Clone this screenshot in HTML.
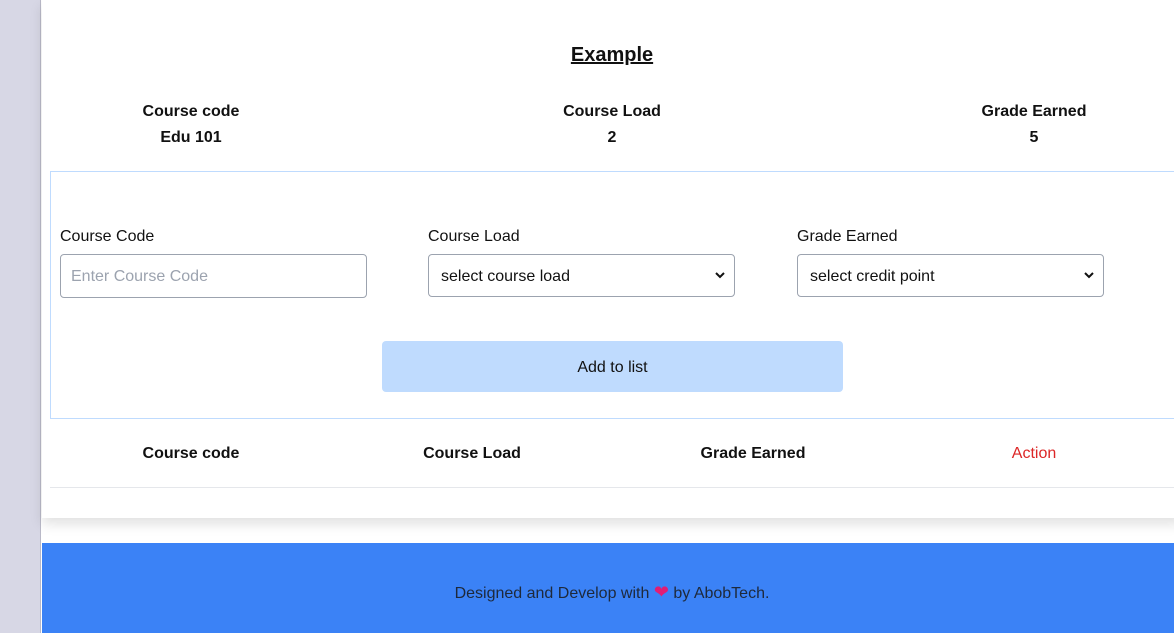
<!DOCTYPE html>
<html><head><style>
*{box-sizing:border-box;margin:0;padding:0}
body{width:1174px;height:633px;overflow:hidden;background:#fff;font-family:"Liberation Sans",sans-serif;color:#111;position:relative}
.a{position:absolute}
.c{text-align:center;transform:translateX(-50%);white-space:nowrap}
.b{font-weight:bold;font-size:16px}
.lbl{font-size:16px;color:#111}
.box{border:1px solid #9ca3af;border-radius:4px;height:44px;background:#fff;font-size:16px;padding:0 12px;line-height:44px}
.chev{position:absolute;right:8px;top:15px}
</style></head><body>
<div class="a" style="left:0;top:0;width:41px;height:633px;background:#d7d7e5;border-right:1px solid #b9b9c8"></div>
<div class="a" style="left:42px;top:0;width:1140px;height:518px;background:#fff;box-shadow:0 6px 12px rgba(0,0,0,0.12)"></div>
<div class="a c" style="left:612px;top:44px;font-size:20px;font-weight:bold;text-decoration:underline">Example</div>
<div class="a c b" style="left:191px;top:103px">Course code</div>
<div class="a c b" style="left:191px;top:129px">Edu 101</div>
<div class="a c b" style="left:612px;top:103px">Course Load</div>
<div class="a c b" style="left:612px;top:129px">2</div>
<div class="a c b" style="left:1034px;top:103px">Grade Earned</div>
<div class="a c b" style="left:1034px;top:129px">5</div>
<div class="a" style="left:50px;top:171px;width:1140px;height:248px;border:1px solid #bfdbfe"></div>
<div class="a lbl" style="left:60px;top:228px">Course Code</div>
<div class="a box" style="left:60px;top:254px;width:307px;color:#9ca3af;padding-left:10px">Enter Course Code</div>
<div class="a lbl" style="left:428px;top:228px">Course Load</div>
<div class="a box" style="left:428px;top:254px;width:307px;height:43px">select course load<svg class="chev" width="12" height="10" viewBox="0 0 12 10"><path d="M2 3l4 4 4-4" fill="none" stroke="#111" stroke-width="2"/></svg></div>
<div class="a lbl" style="left:797px;top:228px">Grade Earned</div>
<div class="a box" style="left:797px;top:254px;width:307px;height:43px">select credit point<svg class="chev" width="12" height="10" viewBox="0 0 12 10"><path d="M2 3l4 4 4-4" fill="none" stroke="#111" stroke-width="2"/></svg></div>
<div class="a" style="left:382px;top:341px;width:461px;height:51px;background:#bfdbfe;border-radius:4px;text-align:center;line-height:53px;font-size:16px">Add to list</div>
<div class="a c b" style="left:191px;top:445px">Course code</div>
<div class="a c b" style="left:472px;top:445px">Course Load</div>
<div class="a c b" style="left:753px;top:445px">Grade Earned</div>
<div class="a c" style="left:1034px;top:445px;font-size:16px;color:#dc2626">Action</div>
<div class="a" style="left:50px;top:487px;width:1130px;height:1px;background:#e5e7eb"></div>
<div class="a" style="left:42px;top:543px;width:1140px;height:90px;background:#3b82f6"></div>
<div class="a c" style="left:612px;top:582px;font-size:16px;color:#1e293b">Designed and Develop with <span style="color:#e11d74;font-size:18px">&#10084;</span> by AbobTech.</div>
</body></html>
